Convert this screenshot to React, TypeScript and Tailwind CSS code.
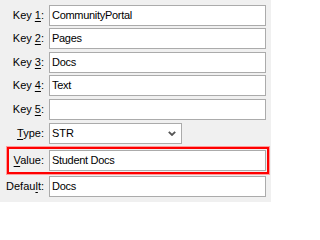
import React from 'react';

const font = { fontFamily: '"Liberation Sans", Arial, sans-serif' };

const Label: React.FC<{ pre: string; key_: string; post: string; w?: string }> = ({ pre, key_, post, w = 'w-[44px]' }) => (
  <div className={`${w} shrink-0 text-right text-[11px] leading-none text-black whitespace-nowrap`}>
    {pre}
    <span className="underline underline-offset-[2px]">{key_}</span>
    {post}
  </div>
);

const Field: React.FC<{ value?: string }> = ({ value = '' }) => (
  <div className="ml-[5px] w-[217px] h-[21px] bg-white border border-[#ababab] flex items-center px-[2px] text-[11px] tracking-[-0.3px] text-black">
    {value}
  </div>
);

const App: React.FC = () => {
  const keys = [
    { n: '1', v: 'CommunityPortal' },
    { n: '2', v: 'Pages' },
    { n: '3', v: 'Docs' },
    { n: '4', v: 'Text' },
    { n: '5', v: '' },
  ];
  const gaps = ['mt-[5px]', 'mt-[2px]', 'mt-[3px]', 'mt-[2px]', 'mt-[3px]'];

  return (
    <div className="w-[271px] h-[202px] bg-[#f0f0f0] flex flex-col overflow-hidden" style={font}>
      {keys.map((k, i) => (
        <div key={k.n} className={`flex items-center ${gaps[i]}`}>
          <Label pre="Key " key_={k.n} post=":" />
          <Field value={k.v} />
        </div>
      ))}

      {/* type select */}
      <div className="flex items-center mt-[3px]">
        <Label pre="" key_="T" post="ype:" />
        <div className="ml-[5px] w-[133px] h-[21px] bg-white border border-[#ababab] flex items-center justify-between pl-[2px] pr-[5px] text-[11px] text-black">
          <span>STR</span>
          <svg width="8" height="5" viewBox="0 0 8 5">
            <path d="M0.8 0.8 L4 4 L7.2 0.8" fill="none" stroke="#555" strokeWidth="1.8" />
          </svg>
        </div>
      </div>

      {/* highlighted value row */}
      <div className="mt-[3px] ml-[7px] w-[262px] h-[27px] border-2 border-[#ff0000] outline outline-1 outline-[#ff9c9c] flex items-center">
        <Label pre="" key_="V" post="alue:" w="w-[35px]" />
        <Field value="Student Docs" />
      </div>

      <div className="flex items-center mt-[2px]">
        <Label pre="Defau" key_="l" post="t:" />
        <Field value="Docs" />
      </div>
    </div>
  );
};

export default App;
